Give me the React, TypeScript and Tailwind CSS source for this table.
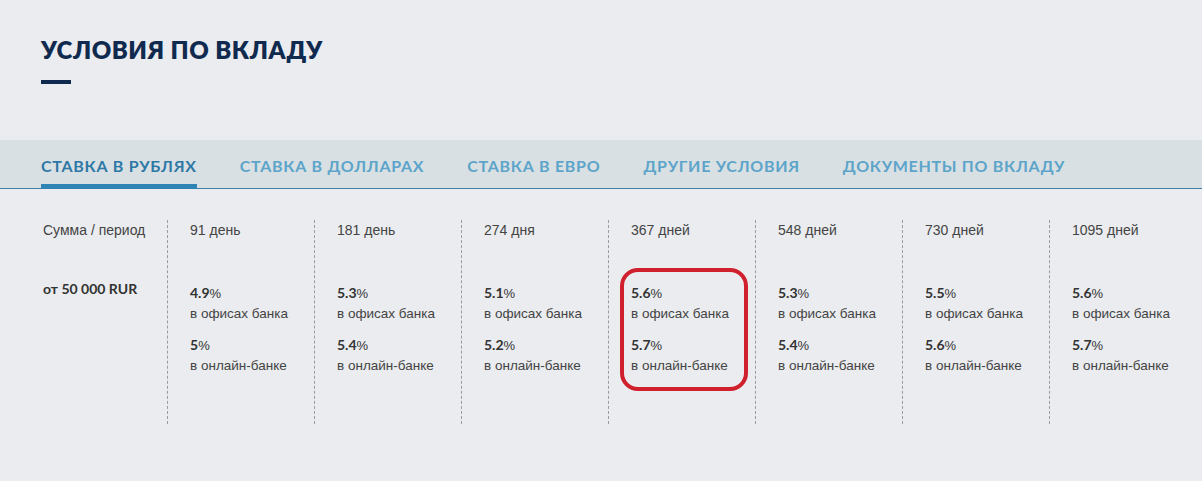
const tabs = [
  "Ставка в рублях",
  "Ставка в долларах",
  "Ставка в евро",
  "Другие условия",
  "Документы по вкладу",
];

const rates = [
  { period: "91 день", office: "4.9", online: "5" },
  { period: "181 день", office: "5.3", online: "5.4" },
  { period: "274 дня", office: "5.1", online: "5.2" },
  { period: "367 дней", office: "5.6", online: "5.7", marked: true },
  { period: "548 дней", office: "5.3", online: "5.4" },
  { period: "730 дней", office: "5.5", online: "5.6" },
  { period: "1095 дней", office: "5.6", online: "5.7" },
];

function Rate({ value, label }: { value: string; label: string }) {
  return (
    <div>
      <div className="text-[13px] leading-[20px] text-[#333]">
        <span className="font-['Lato',sans-serif] text-[14px] font-bold">{value}</span>%
      </div>
      <div className="text-[13.5px] leading-[20px] text-[#444]">{label}</div>
    </div>
  );
}

export default function App() {
  return (
    <div className="min-h-[481px] bg-[#eaecef] font-['Liberation_Sans',Arial,sans-serif]">
      <div className="px-[41px] pt-[35px]">
        <h1 className="font-['Lato',sans-serif] text-[24px] leading-[30px] font-extrabold uppercase tracking-[0.02em] text-[#0f2a4e]">
          Условия по вкладу
        </h1>
        <div className="mt-[15px] h-[4px] w-[30px] bg-[#0f2a4e]" />
      </div>

      <div className="mt-[56px] flex h-[49px] items-stretch gap-[43px] border-b border-[#3f80a6] bg-[#d8e0e3] px-[41px]">
        {tabs.map((t, i) => (
          <div
            key={t}
            className={
              "flex items-center pt-[7px] font-['Lato',sans-serif] text-[16px] font-bold uppercase tracking-[0.045em] " +
              (i === 0
                ? "-mb-px border-b-[5px] border-[#2e85b5] text-[#2e78a6]"
                : "border-b-[4px] border-transparent text-[#5ca4c9]")
            }
          >
            {t}
          </div>
        ))}
      </div>

      <div className="mt-[31px] grid grid-cols-[167px_repeat(6,147px)_1fr]">
        <div className="pl-[43px]">
          <div className="text-[14px] leading-[20px] text-[#444]">Сумма / период</div>
          <div className="mt-[39px] font-['Lato',sans-serif] text-[14px] leading-[20px] font-bold text-[#333]">
            от 50 000 RUR
          </div>
        </div>
        {rates.map((r) => (
          <div
            key={r.period}
            className="h-[204px] border-l border-dashed border-[#9b9b9b] pl-[11px]"
          >
            <div className="pl-[11px] text-[14px] leading-[20px] text-[#444]">{r.period}</div>
            <div
              className={
                "mt-[28px] w-[128px] rounded-[18px] border-4 px-[7px] pt-[11px] pb-[11px] " +
                (r.marked ? "border-[#d0202e]" : "border-transparent")
              }
            >
              <Rate value={r.office} label="в офисах банка" />
              <div className="mt-[11px]">
                <Rate value={r.online} label="в онлайн-банке" />
              </div>
            </div>
          </div>
        ))}
      </div>
    </div>
  );
}
